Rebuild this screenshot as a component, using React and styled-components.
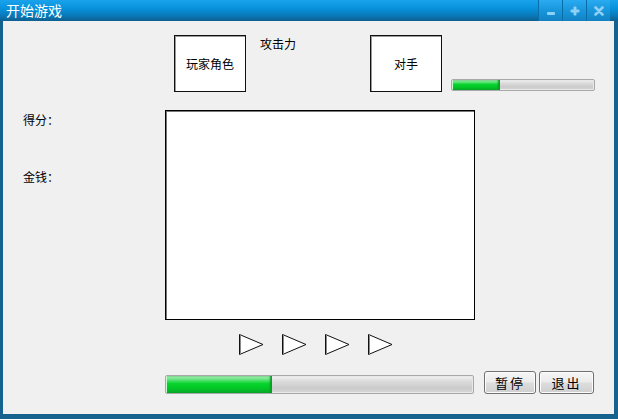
import { createGlobalStyle } from "styled-components";
import styled from "styled-components";

const GlobalStyle = createGlobalStyle`
  html, body {
    margin: 0;
    padding: 0;
    background: #14628d;
  }
  body {
    font-family: "Noto Sans CJK SC", "DejaVu Sans", sans-serif;
    font-size: 12px;
    color: #000;
  }
`;

const Window = styled.div`
  width: 618px;
  height: 419px;
  display: flex;
  flex-direction: column;
  background: #14628d;
  overflow: hidden;
`;

const TitleBar = styled.div`
  height: 21px;
  display: flex;
  align-items: stretch;
  background: linear-gradient(to bottom, #1aa3ec 0%, #0892dc 40%, #0a78b8 75%, #0e5f8e 100%);
`;

const TitleText = styled.div`
  flex: 1;
  padding-left: 6px;
  color: #fff;
  font-size: 14px;
  line-height: 20px;
  white-space: nowrap;
`;

const Controls = styled.div`
  display: flex;
  margin-right: 8px;
`;

const CtrlButton = styled.div`
  width: 23px;
  display: flex;
  align-items: center;
  justify-content: center;
  border-left: 1px solid #0a6ea8;
  background: linear-gradient(to bottom, #2aaaf0 0%, #1796dc 50%, #1282c4 100%);
  color: #8fd0f6;
  svg { display: block; }
`;

const Content = styled.div`
  flex: 1;
  margin: 0 4px 5px 3px;
  background: #f0f0f0;
  display: flex;
  flex-direction: column;
`;

const TopRow = styled.div`
  display: flex;
  align-items: flex-start;
  padding-left: 171px;
  margin-top: 14px;
  height: 57px;
`;

const CharBox = styled.div`
  width: 70px;
  height: 55px;
  border: 1px solid #111;
  box-shadow: inset 1px 1px 0 #9a9a9a;
  background: #fff;
  display: flex;
  align-items: center;
  justify-content: center;
  line-height: 14px;
`;

const AttackLabel = styled.div`
  width: 124px;
  padding-left: 14px;
  box-sizing: border-box;
  margin-top: 2px;
  line-height: 14px;
`;

const Bar = styled.div`
  position: relative;
  box-sizing: border-box;
  width: ${(p) => p.$w}px;
  height: ${(p) => p.$h}px;
  border: 1px solid #a9a9a9;
  border-radius: 2px;
  background: linear-gradient(to bottom, #f4f4f4 0%, #dcdcdc 30%, #cbcbcb 70%, #d8d8d8 100%);
  box-shadow: inset 0 0 0 1px #e8e8e8;
  overflow: hidden;
`;

const Fill = styled.div`
  height: 100%;
  background: linear-gradient(to bottom, #b9f2c2 0%, #5fe27a 22%, #06d42c 45%, #02c426 75%, #0aa82a 100%);
  box-shadow: inset 1px 0 0 #ccf5d4, inset -2px 0 2px #0a9a27;
`;

const SmallBar = styled(Bar)`
  margin-left: 9px;
  margin-top: 44px;
`;

const MidRow = styled.div`
  display: flex;
  margin-top: 18px;
`;

const Stats = styled.div`
  width: 162px;
  padding-left: 20px;
  box-sizing: border-box;
  display: flex;
  flex-direction: column;
`;

const StatLabel = styled.div`
  line-height: 14px;
  margin-top: ${(p) => p.$top}px;
`;

const Canvas = styled.div`
  width: 308px;
  height: 208px;
  border: 1px solid #000;
  box-shadow: inset 1px 1px 0 #777;
  background: #fff;
`;

const ArrowRow = styled.div`
  display: flex;
  gap: 18px;
  padding-left: 236px;
  margin-top: 14px;
`;

const BottomRow = styled.div`
  display: flex;
  align-items: flex-start;
  padding-left: 162px;
  margin-top: 16px;
`;

const BigBar = styled(Bar)`
  margin-top: 4px;
`;

const Buttons = styled.div`
  display: flex;
  gap: 3px;
  margin-left: 10px;
`;

const Button = styled.button`
  width: ${(p) => p.$w}px;
  height: 23px;
  padding: 0;
  border: 1px solid #707070;
  border-radius: 3px;
  background: linear-gradient(to bottom, #f6f6f6 0%, #ebebeb 48%, #dddddd 52%, #cfcfcf 100%);
  box-shadow: inset 0 0 0 1px #fcfcfc;
  font-family: "Noto Sans CJK SC", sans-serif;
  font-size: 13px;
  letter-spacing: 2px;
  line-height: 21px;
  color: #000;
`;

function Arrow() {
  return (
    <svg width="25" height="21" viewBox="0 0 25 21">
      <polygon points="0.5,0.5 24,10.5 0.5,20.5" fill="#fff" stroke="#111" strokeWidth="1" />
      <line x1="1.5" y1="1.5" x2="1.5" y2="19.5" stroke="#888" strokeWidth="1" />
    </svg>
  );
}

export default function App() {
  const arrows = [0, 1, 2, 3];
  return (
    <>
      <GlobalStyle />
      <Window>
        <TitleBar>
          <TitleText>开始游戏</TitleText>
          <Controls>
            <CtrlButton>
              <svg width="10" height="10" viewBox="0 0 10 10">
                <rect x="1" y="6" width="8" height="3" rx="1" fill="currentColor" />
              </svg>
            </CtrlButton>
            <CtrlButton>
              <svg width="10" height="10" viewBox="0 0 10 10">
                <rect x="3.5" y="0.5" width="3" height="9" rx="1" fill="currentColor" />
                <rect x="0.5" y="3.5" width="9" height="3" rx="1" fill="currentColor" />
              </svg>
            </CtrlButton>
            <CtrlButton>
              <svg width="10" height="10" viewBox="0 0 10 10">
                <path d="M1.5 1.5 L8.5 8.5 M8.5 1.5 L1.5 8.5" stroke="currentColor" strokeWidth="2.6" strokeLinecap="round" />
              </svg>
            </CtrlButton>
          </Controls>
        </TitleBar>
        <Content>
          <TopRow>
            <CharBox>玩家角色</CharBox>
            <AttackLabel>攻击力</AttackLabel>
            <CharBox>对手</CharBox>
            <SmallBar $w={144} $h={12}>
              <Fill style={{ width: "34%" }} />
            </SmallBar>
          </TopRow>
          <MidRow>
            <Stats>
              <StatLabel $top={3}>得分：</StatLabel>
              <StatLabel $top={43}>金钱：</StatLabel>
            </Stats>
            <Canvas />
          </MidRow>
          <ArrowRow>
            {arrows.map((a) => (
              <Arrow key={a} />
            ))}
          </ArrowRow>
          <BottomRow>
            <BigBar $w={309} $h={19}>
              <Fill style={{ width: "34.5%" }} />
            </BigBar>
            <Buttons>
              <Button $w={52}>暂停</Button>
              <Button $w={55}>退出</Button>
            </Buttons>
          </BottomRow>
        </Content>
      </Window>
    </>
  );
}
